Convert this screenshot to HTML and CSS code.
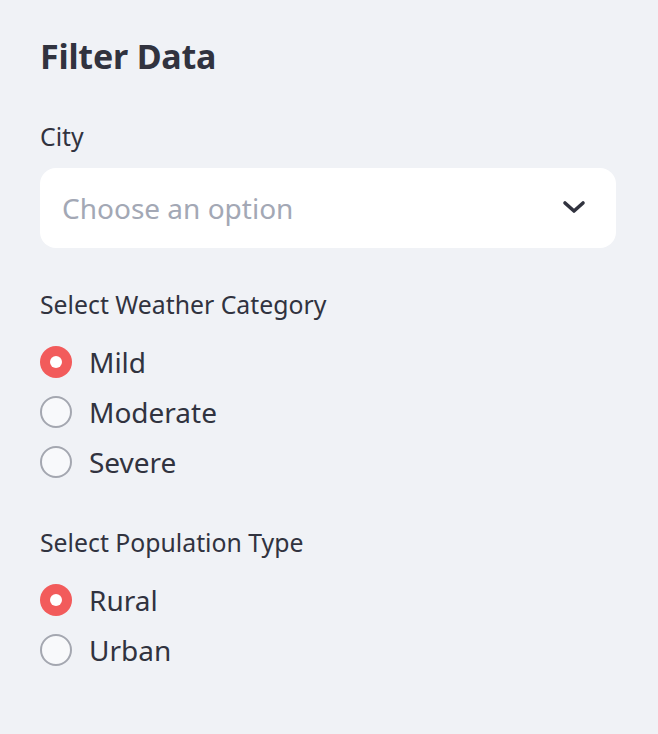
FILE: index.html
```html
<!DOCTYPE html>
<html lang="en">
<head>
<meta charset="utf-8">
<title>Filter Data</title>
<link rel="stylesheet" href="styles.css">
</head>
<body>
<aside class="sidebar">
  <h2 class="title">Filter Data</h2>

  <div class="field">
    <div class="label">City</div>
    <div class="select">
      <span class="placeholder">Choose an option</span>
      <svg class="chevron" width="24" height="24" viewBox="0 0 24 24" aria-hidden="true">
        <path d="M3 7 L12 15 L21 7" fill="none" stroke="#31333f" stroke-width="3.6" stroke-linecap="round" stroke-linejoin="round"/>
      </svg>
    </div>
  </div>

  <div class="field group">
    <div class="label">Select Weather Category</div>
    <div class="options">
      <div class="option"><span class="radio checked"></span><span class="opt-text">Mild</span></div>
      <div class="option"><span class="radio"></span><span class="opt-text">Moderate</span></div>
      <div class="option"><span class="radio"></span><span class="opt-text">Severe</span></div>
    </div>
  </div>

  <div class="field group last">
    <div class="label">Select Population Type</div>
    <div class="options">
      <div class="option"><span class="radio checked"></span><span class="opt-text">Rural</span></div>
      <div class="option"><span class="radio"></span><span class="opt-text">Urban</span></div>
    </div>
  </div>
</aside>
</body>
</html>
```

FILE: styles.css
```css
html, body {
  margin: 0;
  padding: 0;
}

body {
  background: #f0f2f6;
  color: #31333f;
  font-family: "Noto Sans", "Open Sans", sans-serif;
  width: 658px;
  height: 734px;
  overflow: hidden;
}

.sidebar {
  padding: 32px 42px 0 40px;
  display: flex;
  flex-direction: column;
}

.title {
  margin: 0;
  font-size: 34px;
  line-height: 48px;
  font-weight: 700;
  letter-spacing: -0.2px;
}

.field {
  margin-top: 40px;
  display: flex;
  flex-direction: column;
}

.group {
  margin-top: 40px;
}

.group.last {
  margin-top: 39px;
}

.label {
  font-size: 24.8px;
  line-height: 32px;
  font-weight: 400;
}

.select {
  margin-top: 16px;
  height: 80px;
  background: #ffffff;
  border-radius: 16px;
  display: flex;
  align-items: center;
  justify-content: space-between;
  padding: 0 30px 0 22px;
  box-sizing: border-box;
}

.placeholder {
  font-size: 28px;
  line-height: 40px;
  color: #a3a8b5;
}

.chevron {
  display: block;
}

.options {
  margin-top: 17px;
  display: flex;
  flex-direction: column;
}

.option {
  height: 50px;
  display: flex;
  align-items: center;
}

.radio {
  width: 32px;
  height: 32px;
  border-radius: 50%;
  border: 2px solid #a4a7b0;
  background: #f8f9fb;
  box-sizing: border-box;
  flex: none;
  position: relative;
}

.radio.checked {
  border: none;
  background: #f25b5b;
}

.radio.checked::after {
  content: "";
  position: absolute;
  left: 10px;
  top: 10px;
  width: 12px;
  height: 12px;
  border-radius: 50%;
  background: #ffffff;
}

.opt-text {
  margin-left: 17px;
  font-size: 28px;
  line-height: 50px;
}
```
